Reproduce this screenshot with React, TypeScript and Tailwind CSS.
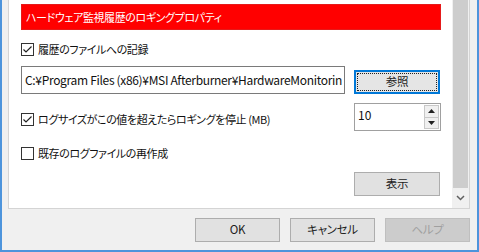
import React from 'react';

const jp = "[font-family:'Noto_Sans_CJK_JP','Noto_Sans',sans-serif] [font-feature-settings:'palt']";

const Check: React.FC<{ checked?: boolean }> = ({ checked }) => (
  <span className="w-[13px] h-[13px] border border-[#333333] bg-white flex items-center justify-center shrink-0">
    {checked && (
      <svg width="11" height="11" viewBox="0 0 11 11">
        <path d="M1.5 5.5 L4 8 L9.5 2.5" fill="none" stroke="#222" strokeWidth="1.2" />
      </svg>
    )}
  </span>
);

const Btn: React.FC<{ label: string; disabled?: boolean; focused?: boolean; className?: string }> = ({ label, disabled, focused, className }) => (
  <div
    className={
      'relative flex items-center justify-center text-[11.5px] tracking-[-0.3px] ' +
      (disabled
        ? 'bg-[#cccccc] border border-[#bfbfbf] text-[#a0a0a0] '
        : focused
        ? 'bg-[#e5e5e5] border-2 border-[#0078d7] text-[#222] '
        : 'bg-[#e1e1e1] border border-[#adadad] text-[#222] ') +
      (className || '')
    }
  >
    {focused && <div className="absolute inset-[1px] border border-dotted border-[#222]" />}
    <span className="relative">{label}</span>
  </div>
);

export default function App() {
  return (
    <div className={`w-[479px] h-[252px] bg-[#f0f0f0] border-l-2 border-r-2 border-b-2 border-[#4d94dc] flex flex-col text-[#111] ${jp}`}>
      <div className="ml-[6px] mr-[7px] h-[209px] bg-white border-l border-r border-b border-[#d4d4d4] flex">
        <div className="flex-1 pl-[12px] pr-[11px] flex flex-col">
          <div className="mt-[4px] h-[26px] bg-[#ff0000] border border-[#e51a1a] text-white text-[11px] tracking-[-0.4px] flex items-center pl-[4px]">
            ハードウェア監視履歴のロギングプロパティ
          </div>

          <label className="mt-[13px] h-[13px] flex items-center gap-[4px] text-[11px] tracking-[-0.4px]">
            <Check checked />
            <span>履歴のファイルへの記録</span>
          </label>

          <div className="mt-[10px] flex items-end">
            <div className="w-[324px] h-[28px] border border-[#7a7a7a] flex items-center pl-[3px] overflow-hidden whitespace-nowrap text-[12px] tracking-[-0.32px]">
              C:¥Program Files (x86)¥MSI Afterburner¥HardwareMonitorin
            </div>
            <Btn label="参照" focused className="ml-[9px] w-[86px] h-[24px]" />
          </div>

          <div className="mt-[9px] flex items-center">
            <label className="flex items-center gap-[4px] text-[11px] tracking-[-0.4px] mt-[4px]">
              <Check checked />
              <span>ログサイズがこの値を超えたらロギングを停止 (MB)</span>
            </label>
            <div className="ml-auto w-[87px] h-[28px] border border-[#a0a0a0] flex">
              <div className="flex-1 text-[12px] pl-[3px] pt-[2px]">10</div>
              <div className="w-[15px] flex flex-col my-[1px] mr-[1px]">
                <div className="flex-1 bg-[#f0f0f0] border border-[#c8c8c8] flex items-center justify-center">
                  <svg width="7" height="4" viewBox="0 0 7 4"><path d="M3.5 0 L7 4 L0 4 Z" fill="#222" /></svg>
                </div>
                <div className="flex-1 bg-[#f0f0f0] border border-[#c8c8c8] border-t-0 flex items-center justify-center">
                  <svg width="7" height="4" viewBox="0 0 7 4"><path d="M0 0 L7 0 L3.5 4 Z" fill="#222" /></svg>
                </div>
              </div>
            </div>
          </div>

          <label className="mt-[16px] h-[12px] flex items-center gap-[4px] text-[11px] tracking-[-0.4px]">
            <Check />
            <span>既存のログファイルの再作成</span>
          </label>

          <div className="mt-[13px] flex justify-end">
            <Btn label="表示" className="w-[86px] h-[24px] mr-[1px]" />
          </div>
        </div>

        <div className="w-[17px] bg-[#f0f0f0] flex flex-col items-center">
          <div className="w-[15px] h-[188px] bg-[#cdcdcd]" />
          <div className="flex-1 flex items-center justify-center">
            <svg width="9" height="6" viewBox="0 0 9 6">
              <path d="M1 1 L4.5 4.5 L8 1" fill="none" stroke="#606060" strokeWidth="1.5" />
            </svg>
          </div>
        </div>
      </div>

      <div className="mt-[9px] flex justify-end gap-[10px] pr-[7px]">
        <Btn label="OK" className="w-[85px] h-[24px]" />
        <Btn label="キャンセル" className="w-[85px] h-[24px]" />
        <Btn label="ヘルプ" disabled className="w-[85px] h-[24px]" />
      </div>
    </div>
  );
}
